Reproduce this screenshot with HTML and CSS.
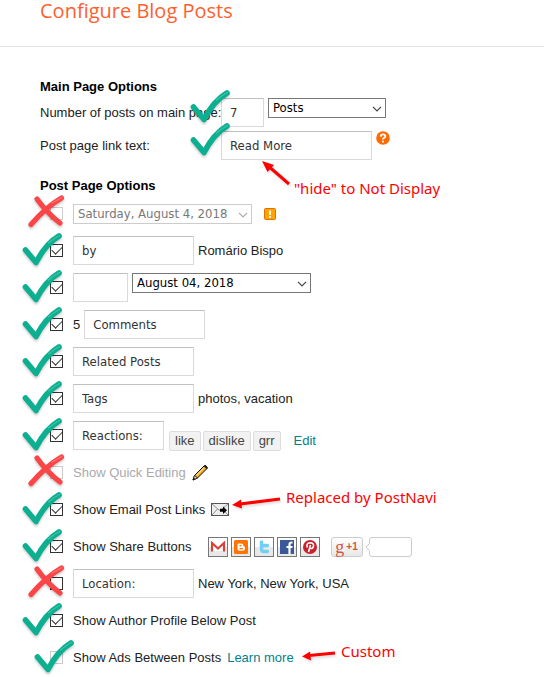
FILE: index.html
```html
<!DOCTYPE html>
<html lang="en">
    <head>
        <meta charset="utf-8">
        <meta name="viewport" content="width=device-width, initial-scale=1">
        <title>Configure Blog Posts</title>
        <link rel="stylesheet" href="styles.css">
    </head>
    <body>
        <svg class="sprites" aria-hidden="true">
            <symbol id="tick" viewBox="0 0 40 34">
                <path d="M3.500 17 L14 29.500 Q23.500 11 37 3" fill="none" stroke="#0caf90" stroke-width="5.600" stroke-linecap="round" stroke-linejoin="round"/>
                <path d="M26.500 10 Q31.500 5.500 37.500 2.500" fill="none" stroke="#3ac3a9" stroke-width="1.200" stroke-linecap="round"/>
            </symbol>
            <symbol id="cross" viewBox="0 0 38 34">
                <path d="M9 4 Q19 18 32 28 M3 29.500 Q18 12 33.500 3" fill="none" stroke="#fc4547" stroke-width="5.200" stroke-linecap="round"/>
                <path d="M24 8 L34 2.500" fill="none" stroke="#ff7475" stroke-width="1.200" stroke-linecap="round"/>
            </symbol>
            <symbol id="chevron" viewBox="0 0 10 6">
                <path d="M1 .8 L5 4.800 L9 .8" fill="none" stroke="currentColor" stroke-width="1.200"/>
            </symbol>
        </svg>

        <header class="header">
            <h1>Configure Blog Posts</h1>
        </header>

        <form class="options">
            <section>
                <h2>Main Page Options</h2>
                <div class="main-row">
                    <label for="post-count">Number of posts on main page:</label>
                    <div class="fields">
                        <input class="text count" id="post-count" type="text" value="7">
                        <span class="select unit">
                            <select aria-label="Unit"><option>Posts</option></select>
                            <svg><use href="#chevron"/></svg>
                        </span>
                    </div>
                    <svg class="mark tick main"><use href="#tick"/></svg>
                </div>
                <div class="main-row">
                    <label for="link-text">Post page link text:</label>
                    <div class="fields">
                        <input class="text long" id="link-text" type="text" value="Read More">
                        <svg class="help" viewBox="0 0 14 14"><circle cx="7" cy="7" r="6.800" fill="#ff6a00"/><path d="M4.700 5.600 Q4.800 3.400 7 3.400 Q9.300 3.400 9.300 5.200 Q9.300 6.300 8 6.900 Q7 7.400 7 8.500 M7 9.700 V11.500" fill="none" stroke="#fff" stroke-width="1.900"/></svg>
                    </div>
                    <svg class="mark tick main"><use href="#tick"/></svg>
                    <div class="note note-hide">
                        <svg class="arrow" viewBox="0 0 30 26"><path d="M28 24 L9 7.500" stroke="#f00" stroke-width="3"/><path d="M1 1 L13 5 L6.500 12 Z" fill="#f00"/></svg>
                        <span>"hide" to Not Display</span>
                    </div>
                </div>
            </section>

            <section class="post-page">
                <h2>Post Page Options</h2>
                <div class="row">
                    <input class="box" type="checkbox" aria-label="Show date header" disabled>
                    <span class="select date disabled">
                        <select aria-label="Date header format" disabled><option>Saturday, August 4, 2018</option></select>
                        <svg><use href="#chevron"/></svg>
                    </span>
                    <svg class="warning" viewBox="0 0 12 12"><rect x=".5" y=".5" width="11" height="11" rx="1" fill="#ffa400" stroke="#e07000"/><path d="M6 2.500 V7 M6 8 V9.700" stroke="#fff" stroke-width="1.800"/></svg>
                    <svg class="mark cross"><use href="#cross"/></svg>
                </div>
                <div class="row">
                    <input class="box" id="author" type="checkbox" checked>
                    <input class="text" type="text" value="by" aria-label="Author prefix">
                    <label for="author">Romário Bispo</label>
                    <svg class="mark tick"><use href="#tick"/></svg>
                </div>
                <div class="row">
                    <input class="box" type="checkbox" aria-label="Show timestamp" checked>
                    <div class="fields">
                        <input class="text small" type="text" aria-label="Timestamp prefix">
                        <span class="select date">
                            <select aria-label="Timestamp format"><option>August 04, 2018</option></select>
                            <svg><use href="#chevron"/></svg>
                        </span>
                    </div>
                    <svg class="mark tick"><use href="#tick"/></svg>
                </div>
                <div class="row">
                    <input class="box" id="comments" type="checkbox" checked>
                    <label for="comments">5</label>
                    <input class="text" type="text" value="Comments" aria-label="Comments text">
                    <svg class="mark tick"><use href="#tick"/></svg>
                </div>
                <div class="row">
                    <input class="box" type="checkbox" aria-label="Show related posts" checked>
                    <input class="text" type="text" value="Related Posts" aria-label="Related posts text">
                    <svg class="mark tick"><use href="#tick"/></svg>
                </div>
                <div class="row">
                    <input class="box" id="tags" type="checkbox" checked>
                    <input class="text" type="text" value="Tags" aria-label="Tags text">
                    <label for="tags">photos, vacation</label>
                    <svg class="mark tick"><use href="#tick"/></svg>
                </div>
                <div class="row">
                    <input class="box" type="checkbox" aria-label="Show reactions" checked>
                    <input class="text medium" type="text" value="Reactions:" aria-label="Reactions text">
                    <div class="reactions">
                        <button type="button">like</button>
                        <button type="button">dislike</button>
                        <button type="button">grr</button>
                        <a href="#">Edit</a>
                    </div>
                    <svg class="mark tick"><use href="#tick"/></svg>
                </div>
                <div class="row muted">
                    <input class="box" id="quick-edit" type="checkbox" disabled>
                    <label for="quick-edit">Show Quick Editing</label>
                    <svg class="pencil" viewBox="0 0 17 17"><path d="M1 16 L2.500 11.500 L12.500 1.500 Q14 .8 15.500 4 L5.500 14 Z" fill="#efa51f" stroke="#111"/><path d="M4.500 11.500 L12.500 3.500" stroke="#ffd778" stroke-width="1.200"/><path d="M2.500 11.500 L5.500 14 L1 16 Z" fill="#eee0c0" stroke="#111" stroke-width=".8"/><path d="M11.500 2.300 L14.500 5 L15.500 4 L13.500 1.200 Z" fill="#222"/><path d="M1 16 L1.700 13.700 L3.500 15.200 Z" fill="#111"/></svg>
                    <svg class="mark cross"><use href="#cross"/></svg>
                </div>
                <div class="row">
                    <input class="box" id="email-links" type="checkbox" checked>
                    <label for="email-links">Show Email Post Links</label>
                    <svg class="envelope" viewBox="0 0 18 13"><rect x=".5" y=".5" width="17" height="12" fill="#eee" stroke="#555"/><path d="M1 1 L8 7 Q9 8 10 7 L17 1 M1 12 L6.500 6 M17 12 L12 6.500" fill="none" stroke="#777" stroke-width=".8"/><path d="M9 5.800 H12 V3.500 L16 7.300 L12 11 V8.800 H9 Z" fill="#000"/></svg>
                    <svg class="mark tick"><use href="#tick"/></svg>
                    <div class="note note-email">
                        <svg class="arrow" viewBox="0 0 50 12"><path d="M49 2 L9 7" stroke="#f00" stroke-width="3"/><path d="M1 8 L10 2.500 L11 11.500 Z" fill="#f00"/></svg>
                        <span>Replaced by PostNavi</span>
                    </div>
                </div>
                <div class="row">
                    <input class="box" id="share" type="checkbox" checked>
                    <label for="share">Show Share Buttons</label>
                    <div class="share">
                        <svg viewBox="1 1 18 18"><path d="M4 6 H16 V14 H4 Z" fill="#fff"/><path d="M4 14.500 V6 L10 11.500 L16 6 V14.500" fill="none" stroke="#d8423a" stroke-width="2.200"/></svg>
                        <svg viewBox="1 1 18 18"><rect x="3" y="3" width="14" height="14" rx="1.500" fill="#ff7300"/><path d="M7.500 6.500 H10.500 Q12.500 6.500 12.500 9 Q14 9.300 14 11 Q14 13.800 11.500 13.800 H8.500 Q6.500 13.800 6.500 12 V7.500 Q6.500 6.500 7.500 6.500 Z" fill="#fff"/><path d="M8.500 8.600 H10.500 M8.500 11.700 H12" stroke="#ff7300" stroke-width="1.200"/></svg>
                        <svg viewBox="1 1 18 18"><path d="M7.500 5 V12 Q7.500 14.500 10 14.500 H13.500 M7.500 8.500 H13.500" fill="none" stroke="#70cff5" stroke-width="3.400" stroke-linecap="round" stroke-linejoin="round"/></svg>
                        <svg viewBox="1 1 18 18"><rect x="3" y="3" width="14" height="14" fill="#3b5998"/><path d="M15.500 5.500 H14.500 Q12.500 5.500 12.500 7.500 V17 M9.500 10 H15.500" fill="none" stroke="#fff" stroke-width="2.200"/></svg>
                        <svg viewBox="1 1 18 18"><circle cx="10" cy="10" r="7" fill="#c8232c"/><path d="M7.300 10.500 Q5.800 6 10.200 5.800 Q14 6 13.500 9 Q12.800 12.300 9.800 11.200 M10.500 8 L8.500 15" fill="none" stroke="#fff" stroke-width="1.600"/></svg>
                    </div>
                    <button class="plus-one" type="button"><span>g</span>+1</button>
                    <svg class="bubble" viewBox="0 0 47 20"><path d="M4.500 6.500 V3 Q4.500 .5 7 .5 H44 Q46.500 .5 46.500 3 V17 Q46.500 19.500 44 19.500 H7 Q4.500 19.500 4.500 17 V13.500 L1 10 Z" fill="#fff" stroke="#ccc"/></svg>
                    <svg class="mark tick"><use href="#tick"/></svg>
                </div>
                <div class="row">
                    <input class="box" id="location" type="checkbox">
                    <input class="text" type="text" value="Location:" aria-label="Location text">
                    <label for="location">New York, New York, USA</label>
                    <svg class="mark cross"><use href="#cross"/></svg>
                </div>
                <div class="row">
                    <input class="box" id="profile" type="checkbox" checked>
                    <label for="profile">Show Author Profile Below Post</label>
                    <svg class="mark tick"><use href="#tick"/></svg>
                </div>
                <div class="row">
                    <input class="box" id="ads" type="checkbox" disabled>
                    <label for="ads">Show Ads Between Posts</label>
                    <a class="learn" href="#">Learn more</a>
                    <svg class="mark tick ads"><use href="#tick"/></svg>
                    <div class="note note-ads">
                        <svg class="arrow" viewBox="0 0 35 10"><path d="M34 2 L8 4.500" stroke="#f00" stroke-width="3"/><path d="M1 5.500 L9 .5 L10 9.500 Z" fill="#f00"/></svg>
                        <span>Custom</span>
                    </div>
                </div>
            </section>
        </form>
    </body>
</html>
```
FILE: styles.css
```css
* { box-sizing: border-box; }

body {
    margin: 0;
    background: #fff;
    color: #222;
    font: 13px/18px "Liberation Sans", Arial, sans-serif;
}

svg { display: block; flex: none; }
.sprites { position: absolute; width: 0; height: 0; }

.header {
    height: 47px;
    padding: 0 40px;
    border-bottom: 1px solid #e5e5e5;
}

h1 {
    margin: 0;
    color: #ff5f2e;
    font: 20px/22px "Open Sans", sans-serif;
}

h2 {
    margin: 0;
    color: #000;
    font-size: 13px;
    line-height: 18px;
}

a { color: #00818f; text-decoration: none; }
label { white-space: nowrap; }

.options { padding: 31px 40px 0; }
.post-page { padding-top: 15px; }

.main-row {
    position: relative;
    display: grid;
    grid-template-columns: 181px 1fr;
    align-items: center;
    height: 33px;
}

.fields {
    display: flex;
    align-items: flex-start;
    gap: 4px;
}

.row {
    position: relative;
    display: flex;
    align-items: center;
    gap: 4px;
    height: 37px;
    padding-left: 10px;
}

.muted { color: #aaa; }

/* form controls */
.text {
    width: 121px;
    height: 29px;
    padding: 0 8px;
    border: 1px solid #d9d9d9;
    border-top-color: #c0c0c0;
    background: #fff;
    color: #333;
    font: 13px Tahoma, "DejaVu Sans Condensed", sans-serif;
}

.text.count { width: 43px; }
.text.small { width: 55px; }
.text.medium { width: 91px; }
.text.long { width: 151px; }

.select { position: relative; color: #000; }
.select.unit { width: 118px; }
.select.date { width: 179px; }
.select.disabled { color: #777; }

.select select {
    display: block;
    width: 100%;
    height: 20px;
    padding: 0 4px;
    border: 1px solid #777;
    border-radius: 0;
    background: #fff;
    color: inherit;
    font: 13px/18px Tahoma, "DejaVu Sans Condensed", sans-serif;
    appearance: none;
    opacity: 1;
}

.select.disabled select { border-color: #ccc; }

.select svg {
    position: absolute;
    top: 8px;
    right: 4px;
    width: 10px;
    height: 6px;
    color: #444;
    pointer-events: none;
}

.select.disabled svg { color: #aaa; }

.box {
    flex: none;
    width: 13px;
    height: 13px;
    margin: 0 6px 0 0;
    border: 1px solid #333;
    background: #fff;
    appearance: none;
}

.box:disabled { border-color: #ccc; }

.box:checked::after {
    content: "";
    display: block;
    width: 9px;
    height: 5px;
    margin: 2px 1px;
    border: solid #333;
    border-width: 0 0 1px 1px;
    transform: translateY(-1px) rotate(-45deg);
}

.help { width: 14px; height: 14px; }
.warning { width: 12px; height: 12px; margin-left: 8px; }
.pencil { width: 17px; height: 17px; margin-left: 2px; }
.envelope { width: 18px; height: 13px; margin-left: 2px; }
.learn { margin-left: 2px; }

.reactions {
    display: flex;
    align-items: center;
    gap: 2px;
    padding: 10px 0 0 1px;
}

.reactions button {
    height: 20px;
    padding: 0 5px;
    border: 1px solid #ddd;
    border-radius: 2px;
    background: #f2f2f2;
    color: #444;
    font: inherit;
}

.reactions a { margin-left: 11px; }

.share {
    display: flex;
    gap: 3px;
    margin-left: 12px;
}

.share svg {
    width: 20px;
    height: 20px;
    border: 1px solid #777;
    background: linear-gradient(#fff 50%, #e8e8e8 50%);
}

.plus-one {
    display: flex;
    align-items: center;
    justify-content: center;
    gap: 2px;
    width: 32px;
    height: 20px;
    margin-left: 7px;
    padding: 0;
    border: 1px solid #ccc;
    border-radius: 3px;
    background: linear-gradient(#fff, #e8e8e8);
    color: #d3573f;
    font: bold 10px "Liberation Sans", Arial, sans-serif;
}

.plus-one span { font: 18px/16px "Liberation Serif", serif; }
.bubble { width: 47px; height: 20px; margin-left: -2px; }

/* marks and notes drawn over the form */
.mark {
    position: absolute;
    filter: drop-shadow(0 2px 1px #0003);
    pointer-events: none;
}

.mark.tick { top: 1px; left: -18px; width: 40px; height: 34px; }
.mark.cross { top: 0; left: -12px; width: 38px; height: 34px; }
.mark.tick.main { top: -6px; left: 150px; }
.mark.tick.ads { left: -6px; }

.note {
    position: absolute;
    display: flex;
    gap: 5px;
    color: #f00;
    font: 15px/20px "Noto Sans", sans-serif;
    white-space: nowrap;
}

.note .arrow { filter: drop-shadow(1px 2px 1px #0002); }
.note-hide { top: 31px; left: 221px; gap: 3px; }
.note-hide .arrow { width: 30px; height: 26px; }
.note-hide span { margin-top: 18px; }
.note-email { top: -4px; left: 191px; }
.note-email .arrow { width: 50px; height: 12px; margin-top: 10px; }
.note-ads { top: 2px; left: 261px; }
.note-ads .arrow { width: 35px; height: 10px; margin-top: 10px; }
```
